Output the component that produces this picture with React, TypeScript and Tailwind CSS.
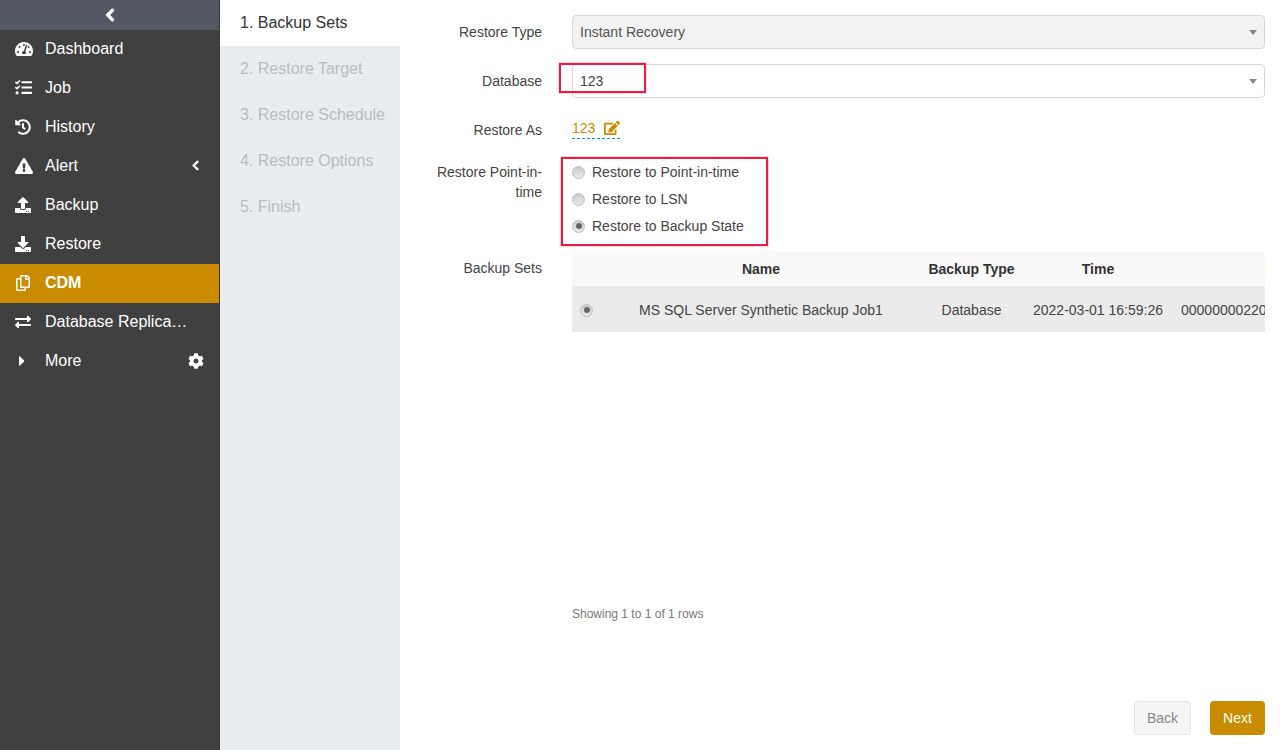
import React from "react";
import {
  FaTachometerAlt,
  FaTasks,
  FaHistory,
  FaExclamationTriangle,
  FaDownload,
  FaUpload,
  FaRegCopy,
  FaExchangeAlt,
  FaCaretRight,
  FaCog,
  FaChevronLeft,
  FaEdit,
} from "react-icons/fa";

const menu = [
  { label: "Dashboard", icon: <FaTachometerAlt size={18} /> },
  { label: "Job", icon: <FaTasks size={17} /> },
  { label: "History", icon: <FaHistory size={16} /> },
  { label: "Alert", icon: <FaExclamationTriangle size={18} />, arrow: true },
  { label: "Backup", icon: <FaUpload size={16} /> },
  { label: "Restore", icon: <FaDownload size={16} /> },
  { label: "CDM", icon: <FaRegCopy size={16} />, active: true },
  { label: "Database Replication", icon: <FaExchangeAlt size={16} /> },
];

const steps = ["1. Backup Sets", "2. Restore Target", "3. Restore Schedule", "4. Restore Options", "5. Finish"];

const Radio = ({ checked }: { checked?: boolean }) => (
  <span className="flex h-[13px] w-[13px] shrink-0 items-center justify-center rounded-full border border-[#bdbdbd] bg-linear-to-b from-[#cacaca] to-[#ebebeb]">
    {checked && <span className="h-[6px] w-[6px] rounded-full bg-[#666]"></span>}
  </span>
);

const Select = ({ value, disabled }: { value: string; disabled?: boolean }) => (
  <div
    className={`flex h-[34px] items-center justify-between rounded border border-[#d5d8e2] pl-[7px] pr-[7px] ${
      disabled ? "bg-[#f2f2f2] text-[#555]" : "bg-white text-[#444]"
    }`}
  >
    <span>{value}</span>
    <span className="h-0 w-0 border-x-[4px] border-t-[5px] border-x-transparent border-t-[#888]"></span>
  </div>
);

const Row = ({ label, children, className, labelClass }: { label: string; children: React.ReactNode; className?: string; labelClass?: string }) => (
  <div className={`flex ${className}`}>
    <div className={`w-[142px] shrink-0 pl-[30px] text-right text-[#444] ${labelClass ?? ""}`}>{label}</div>
    <div className="ml-[30px] min-w-0 flex-1">{children}</div>
  </div>
);

const App = () => {
  return (
    <div className="flex h-[750px] w-[1280px] overflow-hidden bg-white text-sm font-['Liberation_Sans',sans-serif]">
      <div className="w-[220px] shrink-0 border-r border-[#383838] bg-[#404040] text-white">
        <div className="flex h-[30px] items-center justify-center bg-[#545863]">
          <FaChevronLeft size={14} strokeWidth={40} />
        </div>
        {menu.map((m) => (
          <div
            key={m.label}
            className={`flex h-[39px] items-center pb-[2px] pl-[15px] pr-[18px] text-base ${m.active ? "bg-[#c98c00] font-bold" : ""}`}
          >
            <span className="flex w-[30px] shrink-0 items-center">{m.icon}</span>
            <span className="max-w-[143px] truncate">{m.label}</span>
            {m.arrow && (
              <span className="ml-auto">
                <FaChevronLeft size={11} strokeWidth={40} />
              </span>
            )}
          </div>
        ))}
        <div className="flex h-[39px] items-center pb-[2px] pl-[15px] pr-[15px] text-base">
          <span className="flex w-[30px] shrink-0 items-center">
            <FaCaretRight size={16} className="ml-[-1px]" />
          </span>
          <span>More</span>
          <span className="ml-auto">
            <FaCog size={16} />
          </span>
        </div>
      </div>

      <div className="w-[180px] shrink-0 bg-[#e9edf2] text-base">
        {steps.map((s, i) => (
          <div
            key={s}
            className={`flex h-[46px] items-center pl-[20px] ${i === 0 ? "bg-white text-[#333]" : "text-[#b8bcc0]"}`}
          >
            {s}
          </div>
        ))}
      </div>

      <div className="flex min-w-0 flex-1 flex-col pr-[15px] pt-[15px]">
        <Row label="Restore Type" className="items-center">
          <Select value="Instant Recovery" disabled />
        </Row>
        <Row label="Database" className="mt-[15px] items-center">
          <div className="relative">
            <Select value="123" />
            <div className="absolute left-[-13px] top-[-1px] h-[30px] w-[87px] border-2 border-[#ea1c45] shadow-[0_0_1px_#ea1c45]"></div>
          </div>
        </Row>
        <Row label="Restore As" className="mt-[22px]">
          <div className="flex">
            <span className="mt-[-2px] flex items-center gap-[9px] border-b border-dashed border-[#0a8fd0] text-[#c98c00]">
              123 <FaEdit size={16} />
            </span>
          </div>
        </Row>
        <Row label="Restore Point-in-time" className="mt-[22px]">
          <div className="relative flex flex-col gap-[9px] pt-[1px] text-[#444]">
            {["Restore to Point-in-time", "Restore to LSN", "Restore to Backup State"].map((r, i) => (
              <div key={r} className="flex h-[18px] items-center gap-[7px]">
                <Radio checked={i === 2} />
                {r}
              </div>
            ))}
            <div className="absolute left-[-11px] top-[-5px] h-[89px] w-[207px] border-2 border-[#ea1c45] shadow-[0_0_1px_#ea1c45]"></div>
          </div>
        </Row>
        <Row label="Backup Sets" className="mt-[16px]" labelClass="pt-[7px]">
          <div className="overflow-hidden">
            <div className="flex h-[35px] items-center whitespace-nowrap bg-[#f9f9f9] font-bold text-[#333]">
              <div className="w-[34px] shrink-0"></div>
              <div className="w-[310px] shrink-0 text-center">Name</div>
              <div className="w-[111px] shrink-0 text-center">Backup Type</div>
              <div className="w-[142px] shrink-0 text-center">Time</div>
              <div className="ml-auto h-[12px] w-px bg-[#fbfbd0]"></div>
            </div>
            <div className="flex h-[46px] items-center whitespace-nowrap bg-[#ebebeb] pt-[2px] text-[#444]">
              <div className="w-[34px] shrink-0 pl-[8px]">
                <Radio checked />
              </div>
              <div className="w-[310px] shrink-0 text-center">MS SQL Server Synthetic Backup Job1</div>
              <div className="w-[111px] shrink-0 text-center">Database</div>
              <div className="w-[142px] shrink-0 text-center">2022-03-01 16:59:26</div>
              <div className="pl-[12px]">00000000220</div>
            </div>
          </div>
        </Row>
        <div className="ml-[172px] mt-[274px] text-xs text-[#777]">Showing 1 to 1 of 1 rows</div>
        <div className="mt-[79px] flex justify-end gap-[19px]">
          <button className="h-[34px] w-[57px] rounded border border-[#e4e4e4] bg-[#f5f5f5] text-[#888]">Back</button>
          <button className="h-[34px] w-[55px] rounded bg-[#c98c00] text-white">Next</button>
        </div>
      </div>
    </div>
  );
};

export default App;
